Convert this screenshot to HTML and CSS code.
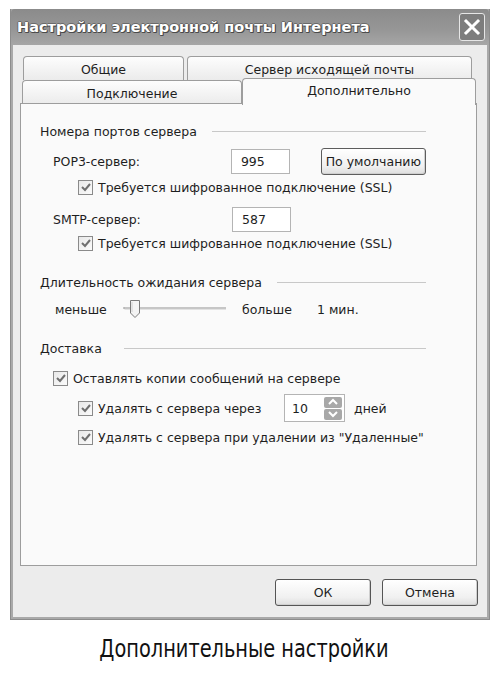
FILE: index.html
```html
<!DOCTYPE html>
<html>
<head>
    <title>Настройки электронной почты Интернета</title>
    <link rel="stylesheet" href="styles.css">
</head>
<body>
<div class="window">
    <div class="titlebar">
        <span class="title">Настройки электронной почты Интернета</span>
        <div class="close">
            <svg width="20" height="20" viewBox="0 0 20 20"><path d="M4 4 L16 16 M16 4 L4 16" stroke="#fff" stroke-width="3" stroke-linecap="square"/></svg>
        </div>
    </div>
    <div class="client">
        <div class="tabs">
            <div class="tab-row row-back">
                <div class="tab tab-general">Общие</div>
                <div class="tab tab-outgoing">Сервер исходящей почты</div>
            </div>
            <div class="tab-row row-front">
                <div class="tab tab-connection">Подключение</div>
                <div class="tab tab-advanced active">Дополнительно</div>
            </div>
        </div>
        <div class="panel">
            <div class="group-title title-ports">Номера портов сервера</div>

            <div class="field-row row-pop3">
                <span class="field-label">POP3-сервер:</span>
                <div class="textbox">995</div>
                <div class="button btn-default">По умолчанию</div>
            </div>
            <div class="check-row indent2 row-ssl1">
                <span class="checkbox"><svg width="12" height="12" viewBox="0 0 12 12"><path d="M2 6 L5 9 L10 3" fill="none" stroke="#6f6f6f" stroke-width="2"/></svg></span>
                <span>Требуется шифрованное подключение (SSL)</span>
            </div>

            <div class="field-row row-smtp">
                <span class="field-label">SMTP-сервер:</span>
                <div class="textbox">587</div>
            </div>
            <div class="check-row indent2 row-ssl2">
                <span class="checkbox"><svg width="12" height="12" viewBox="0 0 12 12"><path d="M2 6 L5 9 L10 3" fill="none" stroke="#6f6f6f" stroke-width="2"/></svg></span>
                <span>Требуется шифрованное подключение (SSL)</span>
            </div>

            <div class="group-title title-timeout">Длительность ожидания сервера</div>
            <div class="slider-row">
                <span class="slider-less">меньше</span>
                <div class="slider">
                    <svg width="104" height="22" viewBox="0 0 104 22">
                        <path d="M1 9 L1 11 M1 10 L103 10" stroke="#b5b5b5" stroke-width="1.5" fill="none"/>
                        <path d="M1.5 11.5 L103 11.5" stroke="#e2e2e2" stroke-width="1" fill="none"/>
                        <path d="M7.5 2.5 H16.5 V15 L12 19.5 L7.5 15 Z" fill="#f3f3f3" stroke="#7a7a7a" stroke-width="1"/>
                        <path d="M9 4 V14" stroke="#d0d0d0" stroke-width="1"/>
                    </svg>
                </div>
                <span class="slider-more">больше</span>
                <span class="slider-value">1 мин.</span>
            </div>

            <div class="group-title title-delivery">Доставка</div>
            <div class="check-row indent1 row-keep">
                <span class="checkbox"><svg width="12" height="12" viewBox="0 0 12 12"><path d="M2 6 L5 9 L10 3" fill="none" stroke="#6f6f6f" stroke-width="2"/></svg></span>
                <span>Оставлять копии сообщений на сервере</span>
            </div>
            <div class="check-row indent2 row-remove">
                <span class="checkbox"><svg width="12" height="12" viewBox="0 0 12 12"><path d="M2 6 L5 9 L10 3" fill="none" stroke="#6f6f6f" stroke-width="2"/></svg></span>
                <span class="remove-label">Удалять с сервера через</span>
                <div class="spinner">
                    <span class="spin-value">10</span>
                    <div class="spin-buttons">
                        <div class="spin-btn"><svg width="12" height="8" viewBox="0 0 12 8"><path d="M2 6 L6 2 L10 6" fill="none" stroke="#fff" stroke-width="2"/></svg></div>
                        <div class="spin-btn"><svg width="12" height="8" viewBox="0 0 12 8"><path d="M2 2 L6 6 L10 2" fill="none" stroke="#fff" stroke-width="2"/></svg></div>
                    </div>
                </div>
                <span class="days">дней</span>
            </div>
            <div class="check-row indent2 row-deleted">
                <span class="checkbox"><svg width="12" height="12" viewBox="0 0 12 12"><path d="M2 6 L5 9 L10 3" fill="none" stroke="#6f6f6f" stroke-width="2"/></svg></span>
                <span>Удалять с сервера при удалении из "Удаленные"</span>
            </div>
        </div>
        <div class="actions">
            <div class="button btn-dialog">ОК</div>
            <div class="button btn-dialog">Отмена</div>
        </div>
    </div>
</div>
<div class="caption">Дополнительные настройки</div>
</body>
</html>
```

FILE: styles.css
```css
body {
    margin: 0;
    padding: 9px 10px 0 10px;
    background: #ffffff;
    font-family: "DejaVu Sans", Verdana, sans-serif;
    font-size: 12.5px;
    color: #1e1e1e;
}
.window {
    width: 480px;
    height: 611px;
    box-sizing: border-box;
    background: #a9a9a9;
    border: 1px solid #8c8c8c;
    border-top: none;
    display: flex;
    flex-direction: column;
}
.titlebar {
    height: 36px;
    flex-shrink: 0;
    display: flex;
    align-items: center;
    justify-content: space-between;
    padding: 0 4px 0 6px;
    background: linear-gradient(#8b8b8b, #979797 60%, #a6a6a6);
    border-radius: 4px 4px 0 0;
}
.title {
    color: #ffffff;
    font-weight: bold;
    font-size: 14.5px;
    text-shadow: 1px 1px 0 #4a4a4a, -1px 0 0 #6a6a6a, 0 -1px 0 #6a6a6a, 1px 0 0 #555, 0 1px 0 #555;
}
.close {
    width: 26px;
    height: 28px;
    box-sizing: border-box;
    border: 1px solid #e6e6e6;
    border-radius: 3px;
    background: #7d7d7d;
    display: flex;
    align-items: center;
    justify-content: center;
}
.client {
    flex: 1;
    margin: 0 2px 2px 2px;
    background: #ececec;
    padding: 11px 10px 0 7px;
    display: flex;
    flex-direction: column;
}
.tabs {
    display: flex;
    flex-direction: column;
}
.tab-row {
    display: flex;
    height: 24px;
}
.row-back {
    padding-left: 3px;
}
.tab {
    box-sizing: border-box;
    height: 24px;
    border: 1px solid #9d9d9d;
    border-bottom: none;
    border-radius: 4px 4px 0 0;
    background: linear-gradient(#fdfdfd, #ebebeb);
    display: flex;
    align-items: center;
    justify-content: center;
    padding-top: 1px;
}
.tab-general {
    width: 161px;
}
.tab-outgoing {
    width: 285px;
    margin-left: 3px;
}
.tab-connection {
    width: 220px;
    margin-left: 2px;
}
.tab-advanced {
    width: 234px;
}
.tab.active {
    background: #fafafa;
    height: 27px;
    margin-top: -2px;
    position: relative;
    z-index: 1;
    padding-bottom: 4px;
}
.panel {
    height: 463px;
    box-sizing: border-box;
    margin-top: -1px;
    background: #fafafa;
    border: 1px solid #9d9d9d;
    padding: 19px 50px 0 19px;
    display: flex;
    flex-direction: column;
}
.group-title {
    height: 16px;
    display: flex;
    align-items: center;
    gap: 15px;
}
.group-title::after {
    content: "";
    flex: 1;
    height: 1px;
    background: #c8c8c8;
}
.title-timeout {
    margin-top: 22px;
}
.title-delivery {
    margin-top: 20px;
}
.title-delivery::after {
    margin-left: 7px;
}
.field-row {
    display: flex;
    align-items: center;
    padding-left: 13px;
}
.row-pop3 {
    height: 27px;
    margin-top: 9px;
}
.row-smtp {
    height: 26px;
    margin-top: 10px;
}
.field-label {
    width: 179px;
}
.textbox {
    width: 59px;
    height: 25px;
    box-sizing: border-box;
    border: 1px solid #b4b4b4;
    background: #ffffff;
    padding-left: 9px;
    display: flex;
    align-items: center;
}
.button {
    box-sizing: border-box;
    border: 1px solid #5d5d5d;
    border-radius: 3px;
    background: linear-gradient(#ffffff, #f0f0f0 70%, #dedede);
    display: flex;
    align-items: center;
    justify-content: center;
    box-shadow: inset -1px -1px 0 #cfcfcf;
}
.btn-default {
    width: 106px;
    height: 27px;
    margin-left: 31px;
}
.check-row {
    display: flex;
    align-items: center;
    height: 18px;
}
.indent1 {
    padding-left: 13px;
}
.indent2 {
    padding-left: 38px;
}
.row-ssl1 {
    margin-top: 3px;
}
.row-ssl2 {
    margin-top: 2px;
}
.row-keep {
    margin-top: 13px;
}
.row-remove {
    height: 28px;
    margin-top: 7px;
}
.row-deleted {
    margin-top: 6px;
}
.checkbox {
    width: 15px;
    height: 15px;
    box-sizing: border-box;
    border: 1px solid #8a8a8a;
    background: linear-gradient(135deg, #e8e8e8, #fbfbfb);
    display: flex;
    align-items: center;
    justify-content: center;
    margin-right: 5px;
    flex-shrink: 0;
}
.slider-row {
    display: flex;
    align-items: center;
    height: 22px;
    margin-top: 8px;
    padding-left: 15px;
}
.slider-less {
    width: 68px;
}
.slider {
    height: 22px;
    width: 104px;
}
.slider-more {
    margin-left: 15px;
    width: 75px;
}
.remove-label {
    width: 186px;
}
.spinner {
    width: 61px;
    height: 28px;
    box-sizing: border-box;
    border: 1px solid #b4b4b4;
    background: #ffffff;
    display: flex;
    align-items: center;
    padding: 0 2px 0 7px;
}
.spin-value {
    flex: 1;
}
.spin-buttons {
    display: flex;
    flex-direction: column;
    gap: 1px;
}
.spin-btn {
    width: 18px;
    height: 11px;
    border-radius: 2px;
    background: #a8a8a8;
    display: flex;
    align-items: center;
    justify-content: center;
}
.days {
    margin-left: 9px;
}
.actions {
    display: flex;
    justify-content: flex-end;
    gap: 11px;
    margin-top: 13px;
    margin-right: -1px;
}
.btn-dialog {
    width: 96px;
    height: 27px;
    border-color: #555;
}
.caption {
    width: 480px;
    text-align: center;
    margin-top: 14px;
    font-family: "DejaVu Sans Condensed", sans-serif;
    font-size: 25px;
    color: #111;
    transform: scaleX(0.86);
    margin-left: -6px;
}
```
